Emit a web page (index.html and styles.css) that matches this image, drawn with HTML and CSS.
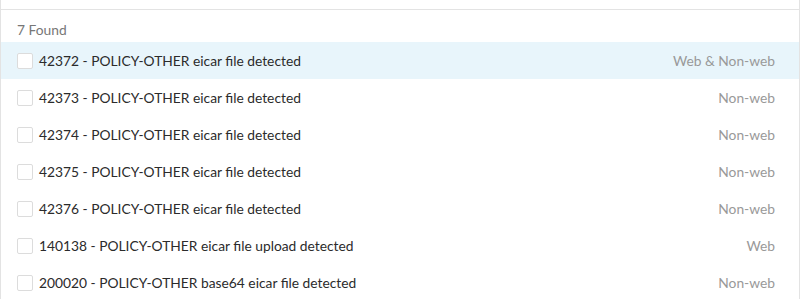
FILE: index.html
```html
<!DOCTYPE html>
<html lang="en">
  <head>
    <meta charset="UTF-8" />
    <title>Rules</title>
    <link rel="stylesheet" href="styles.css">
  </head>
  <body>
    <div class="panel">
      <div class="panel-top"></div>
      <div class="found">7 Found</div>
      <ul class="rules">
        <li class="rule active"><span class="check"></span><span class="name">42372 - POLICY-OTHER eicar file detected</span><span class="type">Web &amp; Non-web</span></li>
        <li class="rule"><span class="check"></span><span class="name">42373 - POLICY-OTHER eicar file detected</span><span class="type">Non-web</span></li>
        <li class="rule"><span class="check"></span><span class="name">42374 - POLICY-OTHER eicar file detected</span><span class="type">Non-web</span></li>
        <li class="rule"><span class="check"></span><span class="name">42375 - POLICY-OTHER eicar file detected</span><span class="type">Non-web</span></li>
        <li class="rule"><span class="check"></span><span class="name">42376 - POLICY-OTHER eicar file detected</span><span class="type">Non-web</span></li>
        <li class="rule"><span class="check"></span><span class="name">140138 - POLICY-OTHER eicar file upload detected</span><span class="type">Web</span></li>
        <li class="rule"><span class="check"></span><span class="name">200020 - POLICY-OTHER base64 eicar file detected</span><span class="type">Non-web</span></li>
      </ul>
    </div>
  </body>
</html>
```
FILE: styles.css
```css
body {
  margin: 0;
  font-family: Lato, "Open Sans", sans-serif;
  font-size: 13.8px;
  background-color: #fff;
}
.panel {
  width: 798px;
  border-left: 1px solid #e3e3e3;
  border-right: 1px solid #e3e3e3;
  height: 299px;
  overflow: hidden;
}
.panel-top {
  height: 9px;
  border-bottom: 1px solid #e3e3e3;
}
.found {
  height: 32px;
  line-height: 40px;
  padding-left: 16px;
  color: #777;
}
.rules {
  list-style: none;
  margin: 0;
  padding: 0;
}
.rule {
  display: flex;
  align-items: center;
  height: 37px;
  padding-left: 16px;
  padding-right: 24px;
  color: #2b2b2b;
}
.rule.active {
  background-color: #e8f5fb;
}
.check {
  width: 14px;
  height: 14px;
  border: 1px solid #dcdcdc;
  border-radius: 2px;
  background-color: #fff;
  margin-right: 6px;
}
.name {
  flex: 1;
}
.type {
  color: #999;
}
```
